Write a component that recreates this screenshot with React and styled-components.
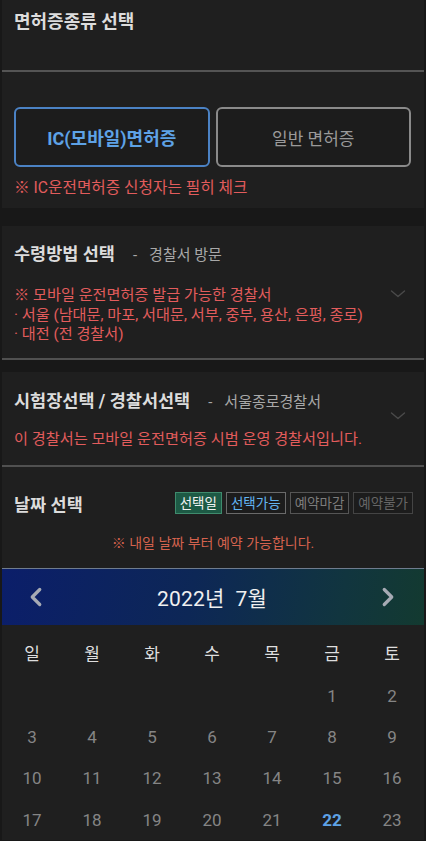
import React from 'react';
import styled, { createGlobalStyle } from 'styled-components';

const GlobalStyle = createGlobalStyle`
  body {
    margin: 0;
    background: #181818;
    font-family: "Roboto", "Noto Sans CJK KR", sans-serif;
  }
`;

const days = ['일', '월', '화', '수', '목', '금', '토'];
const dates = [
  [null, null, null, null, null, 1, 2],
  [3, 4, 5, 6, 7, 8, 9],
  [10, 11, 12, 13, 14, 15, 16],
  [17, 18, 19, 20, 21, 22, 23],
];

const Chevron = ({ dir = 'down', color = '#4a4a4a', size = 16, width = 1.4 }) => {
  const paths = {
    down: 'M1.5 5 L8 10.5 L14.5 5',
    left: 'M11 2 L5 8 L11 14',
    right: 'M5 2 L11 8 L5 14',
  };
  return (
    <svg width={size} height={size} viewBox="0 0 16 16" fill="none">
      <path d={paths[dir]} stroke={color} strokeWidth={width} strokeLinecap="round" strokeLinejoin="round" />
    </svg>
  );
};

const App = () => {
  return (
    <Page>
      <GlobalStyle />
      <TopHeader>
        <Title size={18}>면허증종류 선택</Title>
      </TopHeader>
      <Card className='type'>
        <ButtonRow>
          <TypeButton active>IC(모바일)면허증</TypeButton>
          <TypeButton>일반 면허증</TypeButton>
        </ButtonRow>
        <Notice>※ IC운전면허증 신청자는 필히 체크</Notice>
      </Card>

      <Card bordered className='receive'>
        <TitleRow>
          <Title>수령방법 선택</Title>
          <Sub><Dash>-</Dash>경찰서 방문</Sub>
        </TitleRow>
        <InfoBlock gap={20}>
          <RedList>
            <div>※ 모바일 운전면허증 발급 가능한 경찰서</div>
            <div>· 서울 (남대문, 마포, 서대문, 서부, 중부, 용산, 은평, 종로)</div>
            <div>· 대전 (전 경찰서)</div>
          </RedList>
          <Arrow top={0}><Chevron /></Arrow>
        </InfoBlock>
      </Card>

      <Card bordered className='station'>
        <TitleRow>
          <Title>시험장선택 / 경찰서선택</Title>
          <Sub><Dash>-</Dash>서울종로경찰서</Sub>
        </TitleRow>
        <InfoBlock gap={17}>
          <RedList>
            <div>이 경찰서는 모바일 운전면허증 시범 운영 경찰서입니다.</div>
          </RedList>
          <Arrow top={-22}><Chevron /></Arrow>
        </InfoBlock>
      </Card>

      <DateCard>
        <DateHead>
          <Title>날짜 선택</Title>
          <Legend>
            <Badge kind='selected'>선택일</Badge>
            <Badge kind='available'>선택가능</Badge>
            <Badge kind='closed'>예약마감</Badge>
            <Badge kind='disabled'>예약불가</Badge>
          </Legend>
        </DateHead>
        <DateNotice>※ 내일 날짜 부터 예약 가능합니다.</DateNotice>
        <MonthBar>
          <NavBtn><Chevron dir='left' color='#a6aab4' size={20} width={2.6} /></NavBtn>
          <MonthText>2022년&nbsp;&nbsp;7월</MonthText>
          <NavBtn><Chevron dir='right' color='#a6aab4' size={20} width={2.6} /></NavBtn>
        </MonthBar>
        <Grid>
          {days.map((d) => (
            <WeekDay key={d}>{d}</WeekDay>
          ))}
          {dates.flat().map((d, i) => (
            <DayCell key={i} today={d === 22}>{d || ''}</DayCell>
          ))}
        </Grid>
      </DateCard>
    </Page>
  );
};

const Page = styled.div`
  width: 426px;
  min-height: 841px;
  background: #181818;
  overflow: hidden;
`;

const TopHeader = styled.div`
  height: 72px;
  background: #1f1f1f;
  padding: 10px 12px 0;
  box-sizing: border-box;
  border-bottom: 2px solid #545454;
  margin: 0 2px;
`;

const Title = styled.div`
  font-size: ${(p) => p.size || 17.5}px;
  font-weight: 700;
  color: #dcdcdc;
  line-height: 24px;
`;

const Card = styled.div`
  background: #1f1f1f;
  margin: 0 2px 18px 2px;
  padding: 0 12px;
  box-sizing: border-box;
  border-bottom: ${(p) => (p.bordered ? '2px solid #505050' : 'none')};

  &.type {
    padding-top: 35px;
    height: 136px;
  }

  &.receive {
    padding-top: 16px;
    height: 134px;
    margin-bottom: 12px;
  }

  &.station {
    padding-top: 17px;
    height: 95px;
    margin-bottom: 0;
  }
`;

const ButtonRow = styled.div`
  display: flex;
  gap: 6px;
  padding-right: 1px;
`;

const TypeButton = styled.div`
  flex: 1;
  height: 60px;
  box-sizing: border-box;
  border-radius: 6px;
  display: flex;
  align-items: center;
  justify-content: center;
  border: 2px solid ${(p) => (p.active ? '#4b82c4' : '#8a8a8a')};
  color: ${(p) => (p.active ? '#5ea2e6' : '#9a9a9a')};
  font-weight: ${(p) => (p.active ? 700 : 400)};
  font-size: ${(p) => (p.active ? 18 : 17)}px;
  background: #1c1c1c;
`;

const Notice = styled.div`
  margin-top: 10px;
  font-size: 15.7px;
  color: #e25c5c;
  line-height: 22px;
`;

const TitleRow = styled.div`
  display: flex;
  align-items: baseline;
`;

const Sub = styled.span`
  font-size: 15px;
  color: #a8a8a8;
  margin-left: 18px;
`;

const Dash = styled.span`
  margin-right: 12px;
`;

const InfoBlock = styled.div`
  position: relative;
  margin-top: ${(p) => p.gap}px;
`;

const RedList = styled.div`
  font-size: 15.2px;
  line-height: 19.5px;
  color: #e25c5c;
`;

const Arrow = styled.div`
  position: absolute;
  right: 6px;
  top: ${(p) => p.top}px;
`;

const DateCard = styled.div`
  background: #1f1f1f;
  margin: 0 2px;
  padding-top: 26px;
`;

const DateHead = styled.div`
  display: flex;
  align-items: center;
  justify-content: space-between;
  padding: 0 11px 0 12px;
`;

const badgeStyles = {
  selected: 'background:#1d5a45;border-color:#3f8b6d;color:#f2f2f2;',
  available: 'background:#1c1c1c;border-color:#6a6a6a;color:#62b4f2;',
  closed: 'background:#1c1c1c;border-color:#555;color:#7c7c7c;',
  disabled: 'background:#1c1c1c;border-color:#444;color:#666;',
};

const Legend = styled.div`
  display: flex;
  gap: 4px;
  margin-top: -4px;
`;

const Badge = styled.div`
  height: 22px;
  box-sizing: border-box;
  padding: 0 4px;
  border: 1px solid;
  font-size: 13.5px;
  line-height: 20px;
  ${(p) => badgeStyles[p.kind]}
`;

const DateNotice = styled.div`
  text-align: center;
  margin-top: 16px;
  font-size: 14px;
  color: #d4624e;
  line-height: 20px;
`;

const MonthBar = styled.div`
  margin-top: 15px;
  height: 57px;
  box-sizing: border-box;
  border-top: 1px solid #6f7c8e;
  background: linear-gradient(100deg, #0b1e6a 0%, #0d2756 45%, #11353f 80%, #133a30 100%);
  display: flex;
  align-items: center;
  justify-content: space-between;
  padding: 0 26px 0 24px;
`;

const NavBtn = styled.div`
  display: flex;
  align-items: center;
`;

const MonthText = styled.div`
  font-size: 21px;
  color: #f0f0f0;
  letter-spacing: 0.2px;
`;

const Grid = styled.div`
  display: grid;
  grid-template-columns: repeat(7, 60px);
  grid-template-rows: 46px;
  grid-auto-rows: 41.3px;
  padding-top: 4px;
`;

const WeekDay = styled.div`
  display: flex;
  align-items: center;
  justify-content: center;
  color: #dedede;
  font-size: 17px;
`;

const DayCell = styled.div`
  display: flex;
  align-items: center;
  justify-content: center;
  font-size: 17px;
  color: ${(p) => (p.today ? '#5ea2e6' : '#858585')};
  font-weight: ${(p) => (p.today ? 700 : 400)};
`;

export default App;
